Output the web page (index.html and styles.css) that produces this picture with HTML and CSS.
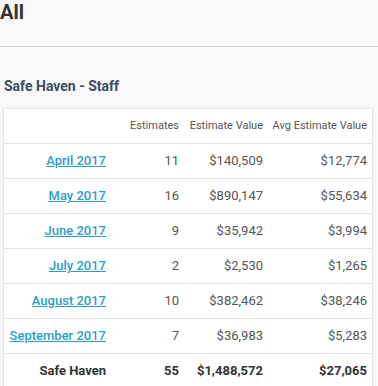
FILE: index.html
```html
<!DOCTYPE html>
<html>
<head>
<meta charset="utf-8">
<link rel="stylesheet" href="styles.css">
</head>
<body>
<header class="page-head">
  <h1 class="page-title">All</h1>
</header>
<section class="report">
  <h2 class="report-title">Safe Haven - Staff</h2>
  <div class="card">
    <table class="grid">
      <colgroup>
        <col class="c1"><col class="c2"><col class="c3"><col class="c4">
      </colgroup>
      <thead>
        <tr><th></th><th>Estimates</th><th>Estimate Value</th><th>Avg Estimate Value</th></tr>
      </thead>
      <tbody>
        <tr><td><a href="#">April 2017</a></td><td>11</td><td>$140,509</td><td>$12,774</td></tr>
        <tr><td><a href="#">May 2017</a></td><td>16</td><td>$890,147</td><td>$55,634</td></tr>
        <tr><td><a href="#">June 2017</a></td><td>9</td><td>$35,942</td><td>$3,994</td></tr>
        <tr><td><a href="#">July 2017</a></td><td>2</td><td>$2,530</td><td>$1,265</td></tr>
        <tr><td><a href="#">August 2017</a></td><td>10</td><td>$382,462</td><td>$38,246</td></tr>
        <tr><td><a href="#">September 2017</a></td><td>7</td><td>$36,983</td><td>$5,283</td></tr>
      </tbody>
      <tfoot>
        <tr><td>Safe Haven</td><td>55</td><td>$1,488,572</td><td>$27,065</td></tr>
      </tfoot>
    </table>
  </div>
</section>
</body>
</html>
```
FILE: styles.css
```css
html, body {
  margin: 0;
  padding: 0;
  background: #f8f8f8;
  font-family: Roboto, "Liberation Sans", sans-serif;
  color: #555;
}
.page-head {
  box-sizing: border-box;
  height: 47px;
  border-bottom: 1px solid #d4d4d4;
}
.page-title {
  margin: 0;
  font-size: 20px;
  line-height: 24px;
  font-weight: 700;
  color: #333;
}
.report {
  padding: 0 0 0 3px;
}
.report-title {
  margin: 0;
  padding: 31px 0 0 1px;
  height: 30px;
  font-size: 14px;
  line-height: 16px;
  font-weight: 700;
  color: #3c4d60;
}
.card {
  width: 370px;
  box-sizing: border-box;
  background: #fff;
  border: 1px solid #e4e4e4;
  border-bottom: none;
  box-shadow: 0 0 2px rgba(0,0,0,0.06);
}
.grid {
  width: 368px;
  border-collapse: separate;
  border-spacing: 0;
  table-layout: fixed;
}
.c1 { width: 107px; }
.c2 { width: 73px; }
.c3 { width: 84px; }
.c4 { width: 104px; }
.grid th, .grid td {
  padding: 0 5px 0 0;
  line-height: 34px;
  text-align: right;
  white-space: nowrap;
}
.grid th {
  font-size: 11px;
  font-weight: 400;
  color: #555;
}
.grid tbody td, .grid tfoot td {
  border-top: 1px solid #e2e2e2;
  font-size: 13px;
  color: #555;
}
.grid tfoot td {
  font-weight: 700;
  color: #333;
}
.grid a {
  color: #2a9dc8;
  font-weight: 500;
  text-decoration: underline;
}
```
